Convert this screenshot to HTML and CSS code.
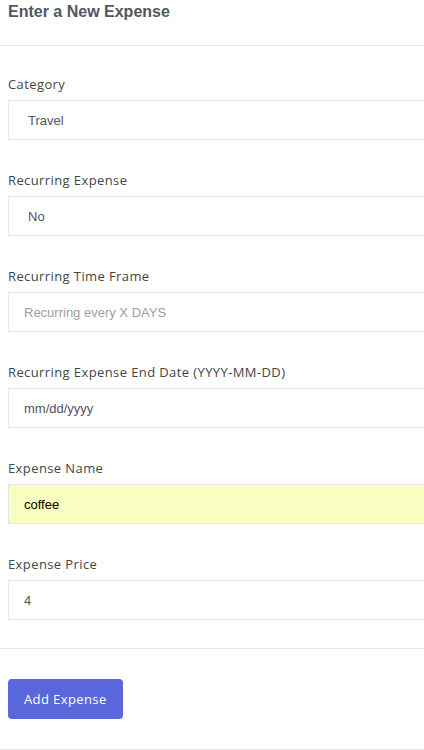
FILE: index.html
```html
<!DOCTYPE html>
<html lang="en">
<head>
<meta charset="utf-8">
<title>Enter a New Expense</title>
<link rel="stylesheet" href="styles.css">
</head>
<body>
<div class="card">
  <div class="card-header">
    <h1 class="card-title">Enter a New Expense</h1>
  </div>
  <form class="card-body">
    <div class="form-group">
      <label class="form-label" for="category">Category</label>
      <select id="category" class="form-control form-select">
        <option>Travel</option>
      </select>
    </div>
    <div class="form-group">
      <label class="form-label" for="recurring">Recurring Expense</label>
      <select id="recurring" class="form-control form-select">
        <option>No</option>
      </select>
    </div>
    <div class="form-group">
      <label class="form-label" for="timeframe">Recurring Time Frame</label>
      <input id="timeframe" class="form-control" type="text" placeholder="Recurring every X DAYS">
    </div>
    <div class="form-group">
      <label class="form-label" for="enddate">Recurring Expense End Date (YYYY-MM-DD)</label>
      <input id="enddate" class="form-control date-input" type="text" placeholder="mm/dd/yyyy">
    </div>
    <div class="form-group">
      <label class="form-label" for="name">Expense Name</label>
      <input id="name" class="form-control autofilled" type="text" value="coffee">
    </div>
    <div class="form-group last">
      <label class="form-label" for="price">Expense Price</label>
      <input id="price" class="form-control" type="text" value="4">
    </div>
  </form>
  <div class="card-footer">
    <button class="btn-primary" type="button">Add Expense</button>
  </div>
</div>
</body>
</html>
```

FILE: styles.css
```css
html, body {
  margin: 0;
  padding: 0;
  background: #ffffff;
  overflow: hidden;
}

.card {
  width: 460px;
  border-bottom: 1px solid #e8e9ef;
  box-sizing: border-box;
}

.card-header {
  height: 46px;
  box-sizing: border-box;
  padding: 2px 8px 0;
  border-bottom: 1px solid #e8e9ef;
}

.card-title {
  margin: 0;
  font-family: "Liberation Sans", Arial, sans-serif;
  font-weight: 700;
  font-size: 16px;
  line-height: 20px;
  color: #51575f;
}

.card-body {
  display: flex;
  flex-direction: column;
  padding: 28px 8px 28px;
  margin: 0;
}

.form-group {
  display: flex;
  flex-direction: column;
  margin-bottom: 30px;
}

.form-group.last {
  margin-bottom: 0;
}

.form-label {
  font-family: "Open Sans", sans-serif;
  font-size: 13px;
  letter-spacing: 0.4px;
  line-height: 20px;
  color: #454545;
  margin-bottom: 6px;
}

.form-control {
  height: 40px;
  box-sizing: border-box;
  border: 1px solid #e4e6e9;
  border-radius: 0;
  background: #ffffff;
  padding: 0 15px;
  margin: 0;
  font-family: "Liberation Sans", Arial, sans-serif;
  font-size: 13px;
  color: #50565d;
  outline: none;
  width: 100%;
}

.form-select {
  appearance: none;
  -webkit-appearance: none;
  padding-left: 19px;
}

.form-control::placeholder {
  color: #9c9ea1;
}

.date-input::placeholder {
  color: #50565d;
}

.autofilled {
  background: #f9fdbf;
  color: #000000;
}

.card-footer {
  padding: 30px 8px 30px;
  border-top: 1px solid #e8e9ef;
}

.btn-primary {
  height: 40px;
  padding: 0 16px;
  border: none;
  border-radius: 4px;
  background: #5a66dc;
  color: #ffffff;
  font-family: "Open Sans", sans-serif;
  font-size: 13px;
  letter-spacing: 0.4px;
  cursor: pointer;
}
```
